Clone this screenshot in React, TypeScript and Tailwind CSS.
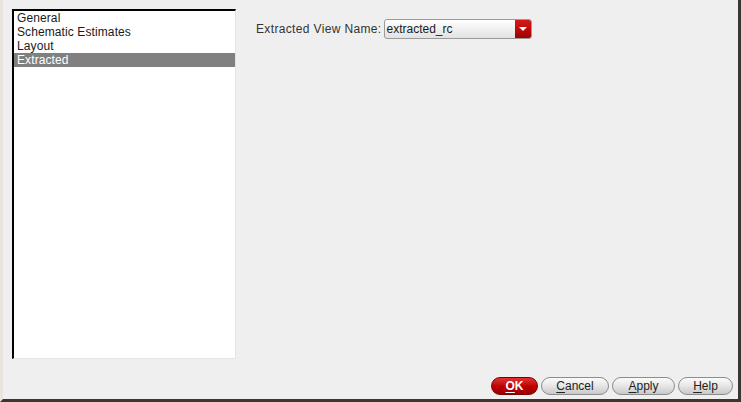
import { useState } from 'react';

const items = ['General', 'Schematic Estimates', 'Layout', 'Extracted'];

function PillButton({ label, width, primary }: { label: string; width: string; primary?: boolean }) {
  const first = label.slice(0, 1);
  const rest = label.slice(1);
  return (
    <button
      className={`${width} h-[18px] rounded-full border text-[12px] leading-none flex items-center justify-center ${
        primary
          ? 'border-[#7a0000] bg-gradient-to-b from-[#e03030] via-[#c00000] to-[#9a0000] text-white font-bold'
          : 'border-[#8c8c8c] bg-gradient-to-b from-[#fbfbfb] via-[#e6e6e6] to-[#c9c9c9] text-[#222]'
      }`}
    >
      <span className="underline underline-offset-2">{first}</span>
      {rest}
    </button>
  );
}

export default function App() {
  const [selected, setSelected] = useState(3);

  return (
    <div
      className="w-[741px] h-[402px] flex flex-col bg-[#efefef] border-l-[3px] border-l-[#e8e5de] border-r-[3px] border-r-[#3a3630] border-b-[3px] border-b-[#3a3630] text-[12px] text-[#1a1a1a]"
      style={{ fontFamily: '"Liberation Sans", Arial, sans-serif' }}
    >
      <div className="flex flex-1 pt-[9px] pl-[9px]">
        {/* Category list */}
        <div className="w-[224px] h-[350px] bg-white border-t-2 border-l-2 border-t-black border-l-black border-r border-b border-r-[#e4e4e4] border-b-[#e4e4e4] flex flex-col">
          {items.map((item, i) => (
            <div
              key={item}
              onClick={() => setSelected(i)}
              className={`h-[14px] pl-[3px] leading-[14px] tracking-[0.1px] cursor-default ${
                selected === i ? 'bg-[#808080] text-white' : 'text-[#1a1a1a]'
              }`}
            >
              {item}
            </div>
          ))}
        </div>

        {/* Form area */}
        <div className="flex-1 pl-[20px] pt-[10px]">
          <div className="flex items-center gap-[2px]">
            <span className="text-[#333] tracking-[0.35px]">Extracted View Name:</span>
            <div className="w-[148px] h-[20px] rounded-[3px] border border-[#9a9a9a] bg-gradient-to-b from-white to-[#e2e2e2] flex items-center overflow-hidden">
              <span className="flex-1 pl-[2px] text-[#1a1a1a]">extracted_rc</span>
              <div className="w-[16px] h-full bg-gradient-to-b from-[#d81818] to-[#a00000] flex items-center justify-center">
                <div className="w-0 h-0 border-l-[4px] border-r-[4px] border-t-[4px] border-l-transparent border-r-transparent border-t-white" />
              </div>
            </div>
          </div>
        </div>
      </div>

      {/* Button bar */}
      <div className="flex justify-end gap-[3px] pr-[5px] pb-[4px]">
        <PillButton label="OK" width="w-[47px]" primary />
        <PillButton label="Cancel" width="w-[68px]" />
        <PillButton label="Apply" width="w-[63px]" />
        <PillButton label="Help" width="w-[55px]" />
      </div>
    </div>
  );
}
